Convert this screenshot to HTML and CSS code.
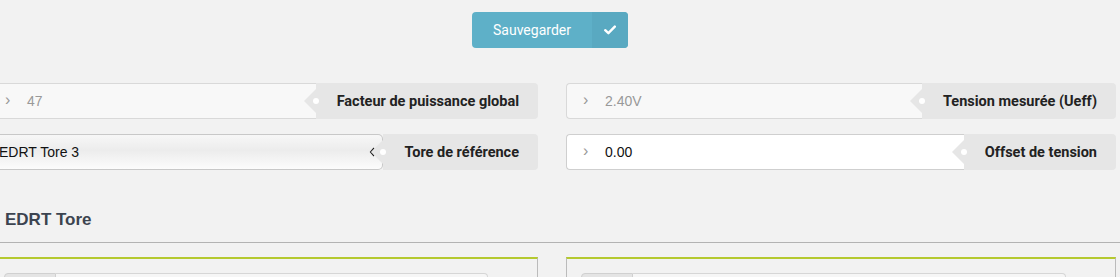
FILE: index.html
```html
<!DOCTYPE html>
<html lang="fr">
<head>
    <meta charset="UTF-8">
    <title>EDRT</title>
    <link rel="stylesheet" href="styles.css">
</head>
<body>
    <div class="page">
        <div class="toolbar">
            <button class="save-btn">
                <span class="save-label">Sauvegarder</span>
                <span class="save-icon">
                    <svg width="12" height="10" viewBox="0 0 12 10"><path d="M1.2 5.2 L4.4 8.2 L10.8 1.6" fill="none" stroke="#fff" stroke-width="2.4" stroke-linecap="round" stroke-linejoin="round"/></svg>
                </span>
            </button>
        </div>

        <div class="grid">
            <div class="col">
                <div class="row">
                    <div class="field readonly">
                        <span class="chev">&#8250;</span>
                        <span class="value">47</span>
                    </div>
                    <div class="tag">Facteur de puissance global</div>
                </div>
                <div class="row">
                    <div class="select">
                        <span class="value dark">EDRT Tore 3</span>
                        <svg class="select-arrow" width="6" height="10" viewBox="0 0 6 10"><path d="M5 1 L1.5 5 L5 9" fill="none" stroke="#222" stroke-width="1.2"/></svg>
                    </div>
                    <div class="tag">Tore de référence</div>
                </div>
            </div>
            <div class="col">
                <div class="row">
                    <div class="field readonly bordered">
                        <span class="chev">&#8250;</span>
                        <span class="value">2.40V</span>
                    </div>
                    <div class="tag">Tension mesurée (Ueff)</div>
                </div>
                <div class="row">
                    <div class="field editable bordered">
                        <span class="chev">&#8250;</span>
                        <span class="value dark">0.00</span>
                    </div>
                    <div class="tag">Offset de tension</div>
                </div>
            </div>
        </div>

        <h2 class="section-title">EDRT Tore</h2>

        <div class="grid panels">
            <div class="panel">
                <div class="input-group"><span class="addon"></span><span class="input"></span></div>
            </div>
            <div class="panel">
                <div class="input-group"><span class="addon"></span><span class="input"></span></div>
            </div>
        </div>
    </div>
</body>
</html>
```

FILE: styles.css
```css
:root {
    --bg-color: #f2f2f2;
    --tag-bg: #e6e6e6;
    --border-color: #d9d9d9;
    --accent-color: #b5c92f;
    --btn-color: #5eb0c8;
    --btn-dark: #59a9c1;
}

body {
    background-color: var(--bg-color);
    margin: 0;
    font-family: 'Liberation Sans', Arial, sans-serif;
    overflow: hidden;
}

.page {
    margin-left: -11px;
    width: 1127px;
}

.toolbar {
    text-align: center;
    padding-top: 12px;
    padding-right: 5px;
    height: 36px;
}

.save-btn {
    display: inline-flex;
    height: 36px;
    padding: 0;
    border: none;
    border-radius: 4px;
    overflow: hidden;
    background-color: var(--btn-color);
    color: #fff;
    font-family: Roboto, sans-serif;
    font-size: 14px;
    cursor: pointer;
}

.save-label {
    width: 120px;
    line-height: 36px;
    text-align: center;
}

.save-icon {
    width: 36px;
    display: flex;
    align-items: center;
    justify-content: center;
    background-color: var(--btn-dark);
}

.grid {
    display: grid;
    grid-template-columns: 549px 550px;
    column-gap: 28px;
}

.col {
    display: flex;
    flex-direction: column;
    gap: 15px;
    margin-top: 35px;
}

.row {
    display: flex;
    height: 36px;
}

.field {
    flex: 1;
    display: flex;
    align-items: center;
    box-sizing: border-box;
    border-top: 1px solid var(--border-color);
    border-bottom: 1px solid var(--border-color);
}

.field.bordered {
    border-left: 1px solid var(--border-color);
    border-radius: 4px 0 0 4px;
}

.field.readonly {
    background-color: #f8f8f8;
}

.field.editable {
    background-color: #fff;
    border-color: #cfcfcf;
}

.chev {
    width: 14px;
    margin-left: 16px;
    margin-right: 8px;
    color: #999;
    font-size: 16px;
    line-height: 1;
    padding-bottom: 2px;
}

.value {
    font-size: 14px;
    color: #999;
}

.value.dark {
    color: #111;
}

.select {
    width: 396px;
    display: flex;
    align-items: center;
    justify-content: space-between;
    box-sizing: border-box;
    padding-left: 10px;
    padding-right: 7px;
    border: 1px solid #c8c8c8;
    border-left: none;
    border-radius: 0 5px 5px 0;
    background: linear-gradient(#f7f7f7, #ececec 45%, #fcfcfc);
}

.tag {
    position: relative;
    display: flex;
    align-items: center;
    padding: 0 19px 0 21px;
    background-color: var(--tag-bg);
    border-radius: 0 4px 4px 0;
    font-family: Roboto, sans-serif;
    font-weight: bold;
    font-size: 14.5px;
    color: #222;
    white-space: nowrap;
}

.select + .tag {
    flex: 1;
    justify-content: flex-end;
}

.tag::before {
    content: '';
    position: absolute;
    left: -12px;
    top: 6px;
    border-top: 12px solid transparent;
    border-bottom: 12px solid transparent;
    border-right: 12px solid var(--tag-bg);
}

.tag::after {
    content: '';
    position: absolute;
    left: -3px;
    top: 15px;
    width: 6px;
    height: 6px;
    border-radius: 50%;
    background-color: #fff;
}

.section-title {
    margin: 40px 0 0 0;
    padding: 0 0 12px 16px;
    font-size: 17px;
    line-height: 20px;
    color: #3c4450;
    border-bottom: 1px solid #b3b3b3;
    width: 1140px;
}

.panels {
    margin-top: 14px;
}

.panel {
    height: 40px;
    border-top: 2px solid var(--accent-color);
    border-left: 1px solid #bbb;
    border-right: 1px solid #bbb;
    padding: 14px 49px 0 14px;
}

.input-group {
    display: flex;
    height: 30px;
}

.addon {
    width: 50px;
    background-color: #e4e4e4;
    border: 1px solid #d0d0d0;
    border-radius: 4px 0 0 4px;
}

.input {
    flex: 1;
    background-color: #f6f6f6;
    border: 1px solid #d6d6d6;
    border-left: none;
    border-radius: 0 4px 4px 0;
}
```
